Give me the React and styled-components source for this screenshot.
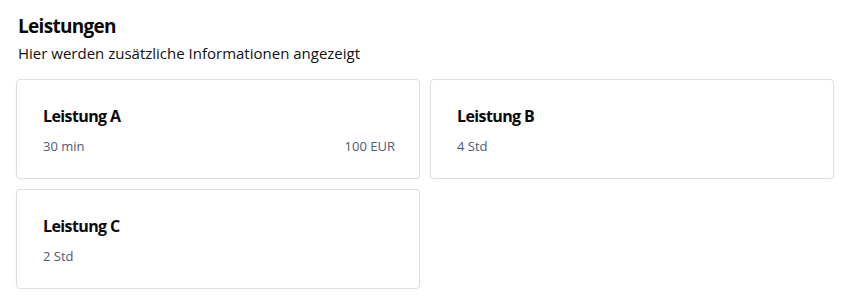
import React from "react";
import styled, { createGlobalStyle } from "styled-components";

const Global = createGlobalStyle`
  html, body { margin: 0; padding: 0; background: #fff; }
  body { font-family: "Open Sans", "Noto Sans", sans-serif; color: #111; }
`;

const Page = styled.div`
  padding: 13px 12px 0 16px;
`;

const Heading = styled.h1`
  margin: 0 0 0 2px;
  font-size: 19px;
  font-weight: 700;
  letter-spacing: -0.7px;
  line-height: 26px;
  color: #0a0a0a;
`;

const Sub = styled.p`
  margin: 3px 0 0 2px;
  font-size: 15px;
  line-height: 22px;
  color: #111;
`;

const Grid = styled.div`
  display: grid;
  grid-template-columns: 1fr 1fr;
  gap: 10px;
  margin-top: 15px;
`;

const Card = styled.div`
  box-sizing: border-box;
  height: 100px;
  border: 1px solid #dedede;
  border-radius: 4px;
  background: #fff;
  box-shadow: 0 1px 3px rgba(0, 0, 0, 0.04);
  padding: 25px 24px 0 26px;
`;

const CardTitle = styled.div`
  font-size: 16px;
  font-weight: 700;
  letter-spacing: -0.6px;
  line-height: 22px;
  color: #0a0a0a;
`;

const Meta = styled.div`
  display: flex;
  justify-content: space-between;
  margin-top: 10px;
  font-size: 13px;
  line-height: 18px;
  color: #4d5878;
`;

const items = [
  { name: "Leistung A", time: "30 min", price: "100 EUR" },
  { name: "Leistung B", time: "4 Std" },
  { name: "Leistung C", time: "2 Std" },
];

export default function App() {
  return (
    <Page>
      <Global />
      <Heading>Leistungen</Heading>
      <Sub>Hier werden zusätzliche Informationen angezeigt</Sub>
      <Grid>
        {items.map((it) => (
          <Card key={it.name}>
            <CardTitle>{it.name}</CardTitle>
            <Meta>
              <span>{it.time}</span>
              {it.price && <span>{it.price}</span>}
            </Meta>
          </Card>
        ))}
      </Grid>
    </Page>
  );
}
